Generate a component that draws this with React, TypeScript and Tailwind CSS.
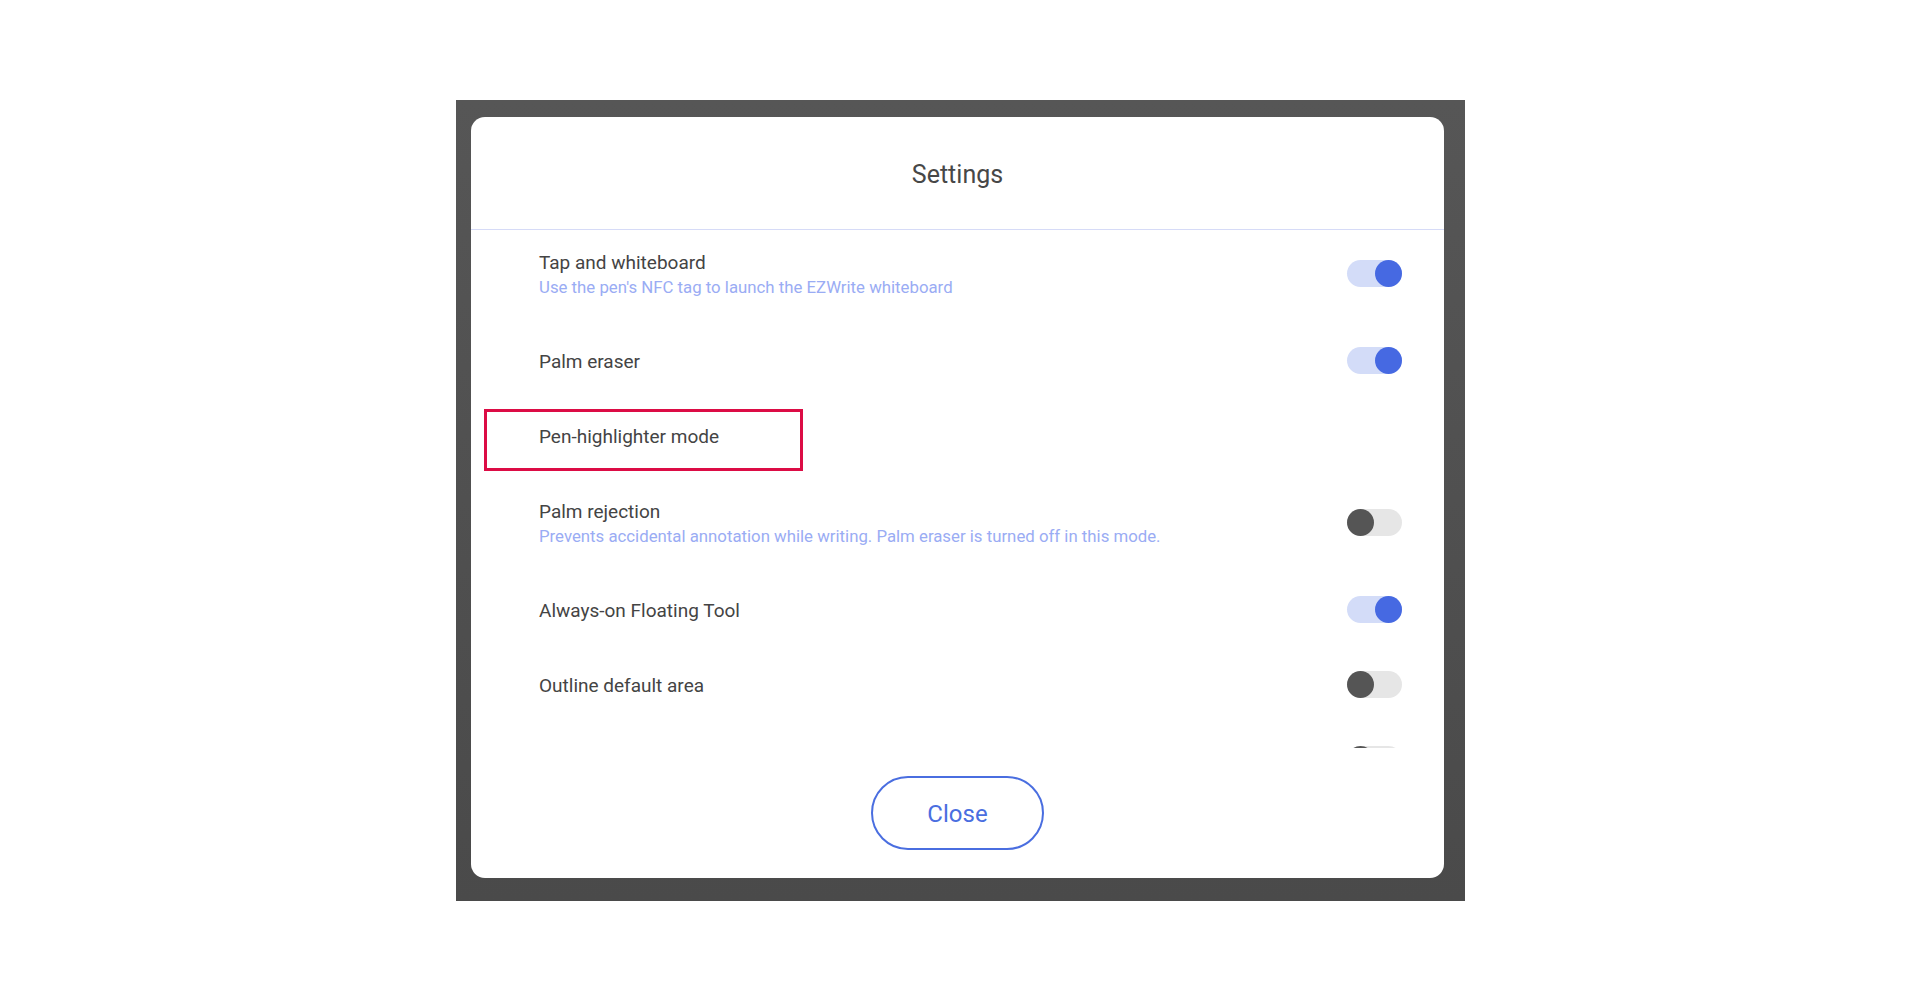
import React from 'react';

type Row = {
  title: string;
  desc?: string;
  toggle?: boolean;
  highlight?: boolean;
};

const ROWS: Row[] = [
  { title: 'Tap and whiteboard', desc: "Use the pen's NFC tag to launch the EZWrite whiteboard", toggle: true },
  { title: 'Palm eraser', toggle: true },
  { title: 'Pen-highlighter mode', highlight: true },
  { title: 'Palm rejection', desc: 'Prevents accidental annotation while writing. Palm eraser is turned off in this mode.', toggle: false },
  { title: 'Always-on Floating Tool', toggle: true },
  { title: 'Outline default area', toggle: false },
  { title: '', toggle: false },
];

const Toggle: React.FC<{ on: boolean }> = ({ on }) => (
  <div
    className={`relative h-[27px] w-[55px] shrink-0 -my-[2px] -translate-y-[2px] rounded-full ${
      on ? 'bg-[#d3dcf8]' : 'bg-[#e6e6e6]'
    }`}
  >
    <div
      className={`absolute top-0 h-[27px] w-[27px] rounded-full ${
        on ? 'right-0 bg-[#4669e2]' : 'left-0 bg-[#555555]'
      }`}
    />
  </div>
);

const App: React.FC = () => {
  return (
    <div className="h-screen w-full bg-white flex items-center justify-center font-['Roboto',sans-serif]">
      {/* device frame */}
      <div className="w-[1009px] h-[801px] bg-gradient-to-b from-[#565656] to-[#4a4a4a] pl-[15px] pr-[21px] pt-[17px] pb-[23px]">
        <div className="h-full w-full bg-white rounded-[14px] flex flex-col overflow-hidden">
          {/* header */}
          <div className="h-[113px] shrink-0 flex items-center justify-center border-b border-[#d6dbf7]">
            <h2 className="text-[25px] leading-none text-[#474747] translate-y-[1px]">Settings</h2>
          </div>

          {/* settings list */}
          <div className="h-[518px] shrink-0 overflow-hidden">
            <div className="flex flex-col gap-[51px] pt-[21px] pl-[68px] pr-[42px]">
              {ROWS.map((row, i) => (
                <div key={i} className="relative flex items-center justify-between">
                  {row.highlight && (
                    <div className="absolute -left-[55px] -top-[16px] w-[319px] h-[62px] border-[3px] border-[#dc0c45]" />
                  )}
                  <div className="flex flex-col">
                    <span className="text-[19px] leading-[24px] text-[#444444] min-h-[24px]">{row.title}</span>
                    {row.desc && (
                      <span className="text-[16.8px] leading-[24px] text-[#9aacf4]">{row.desc}</span>
                    )}
                  </div>
                  {row.toggle !== undefined && <Toggle on={row.toggle} />}
                </div>
              ))}
            </div>
          </div>

          {/* footer */}
          <div className="flex-1 flex items-start justify-center pt-[28px]">
            <button className="h-[74px] w-[173px] rounded-full border-2 border-[#4a6ee0] text-[24px] text-[#4a6ee0] flex items-center justify-center">
              <span className="translate-y-[1px]">Close</span>
            </button>
          </div>
        </div>
      </div>
    </div>
  );
};

export default App;
